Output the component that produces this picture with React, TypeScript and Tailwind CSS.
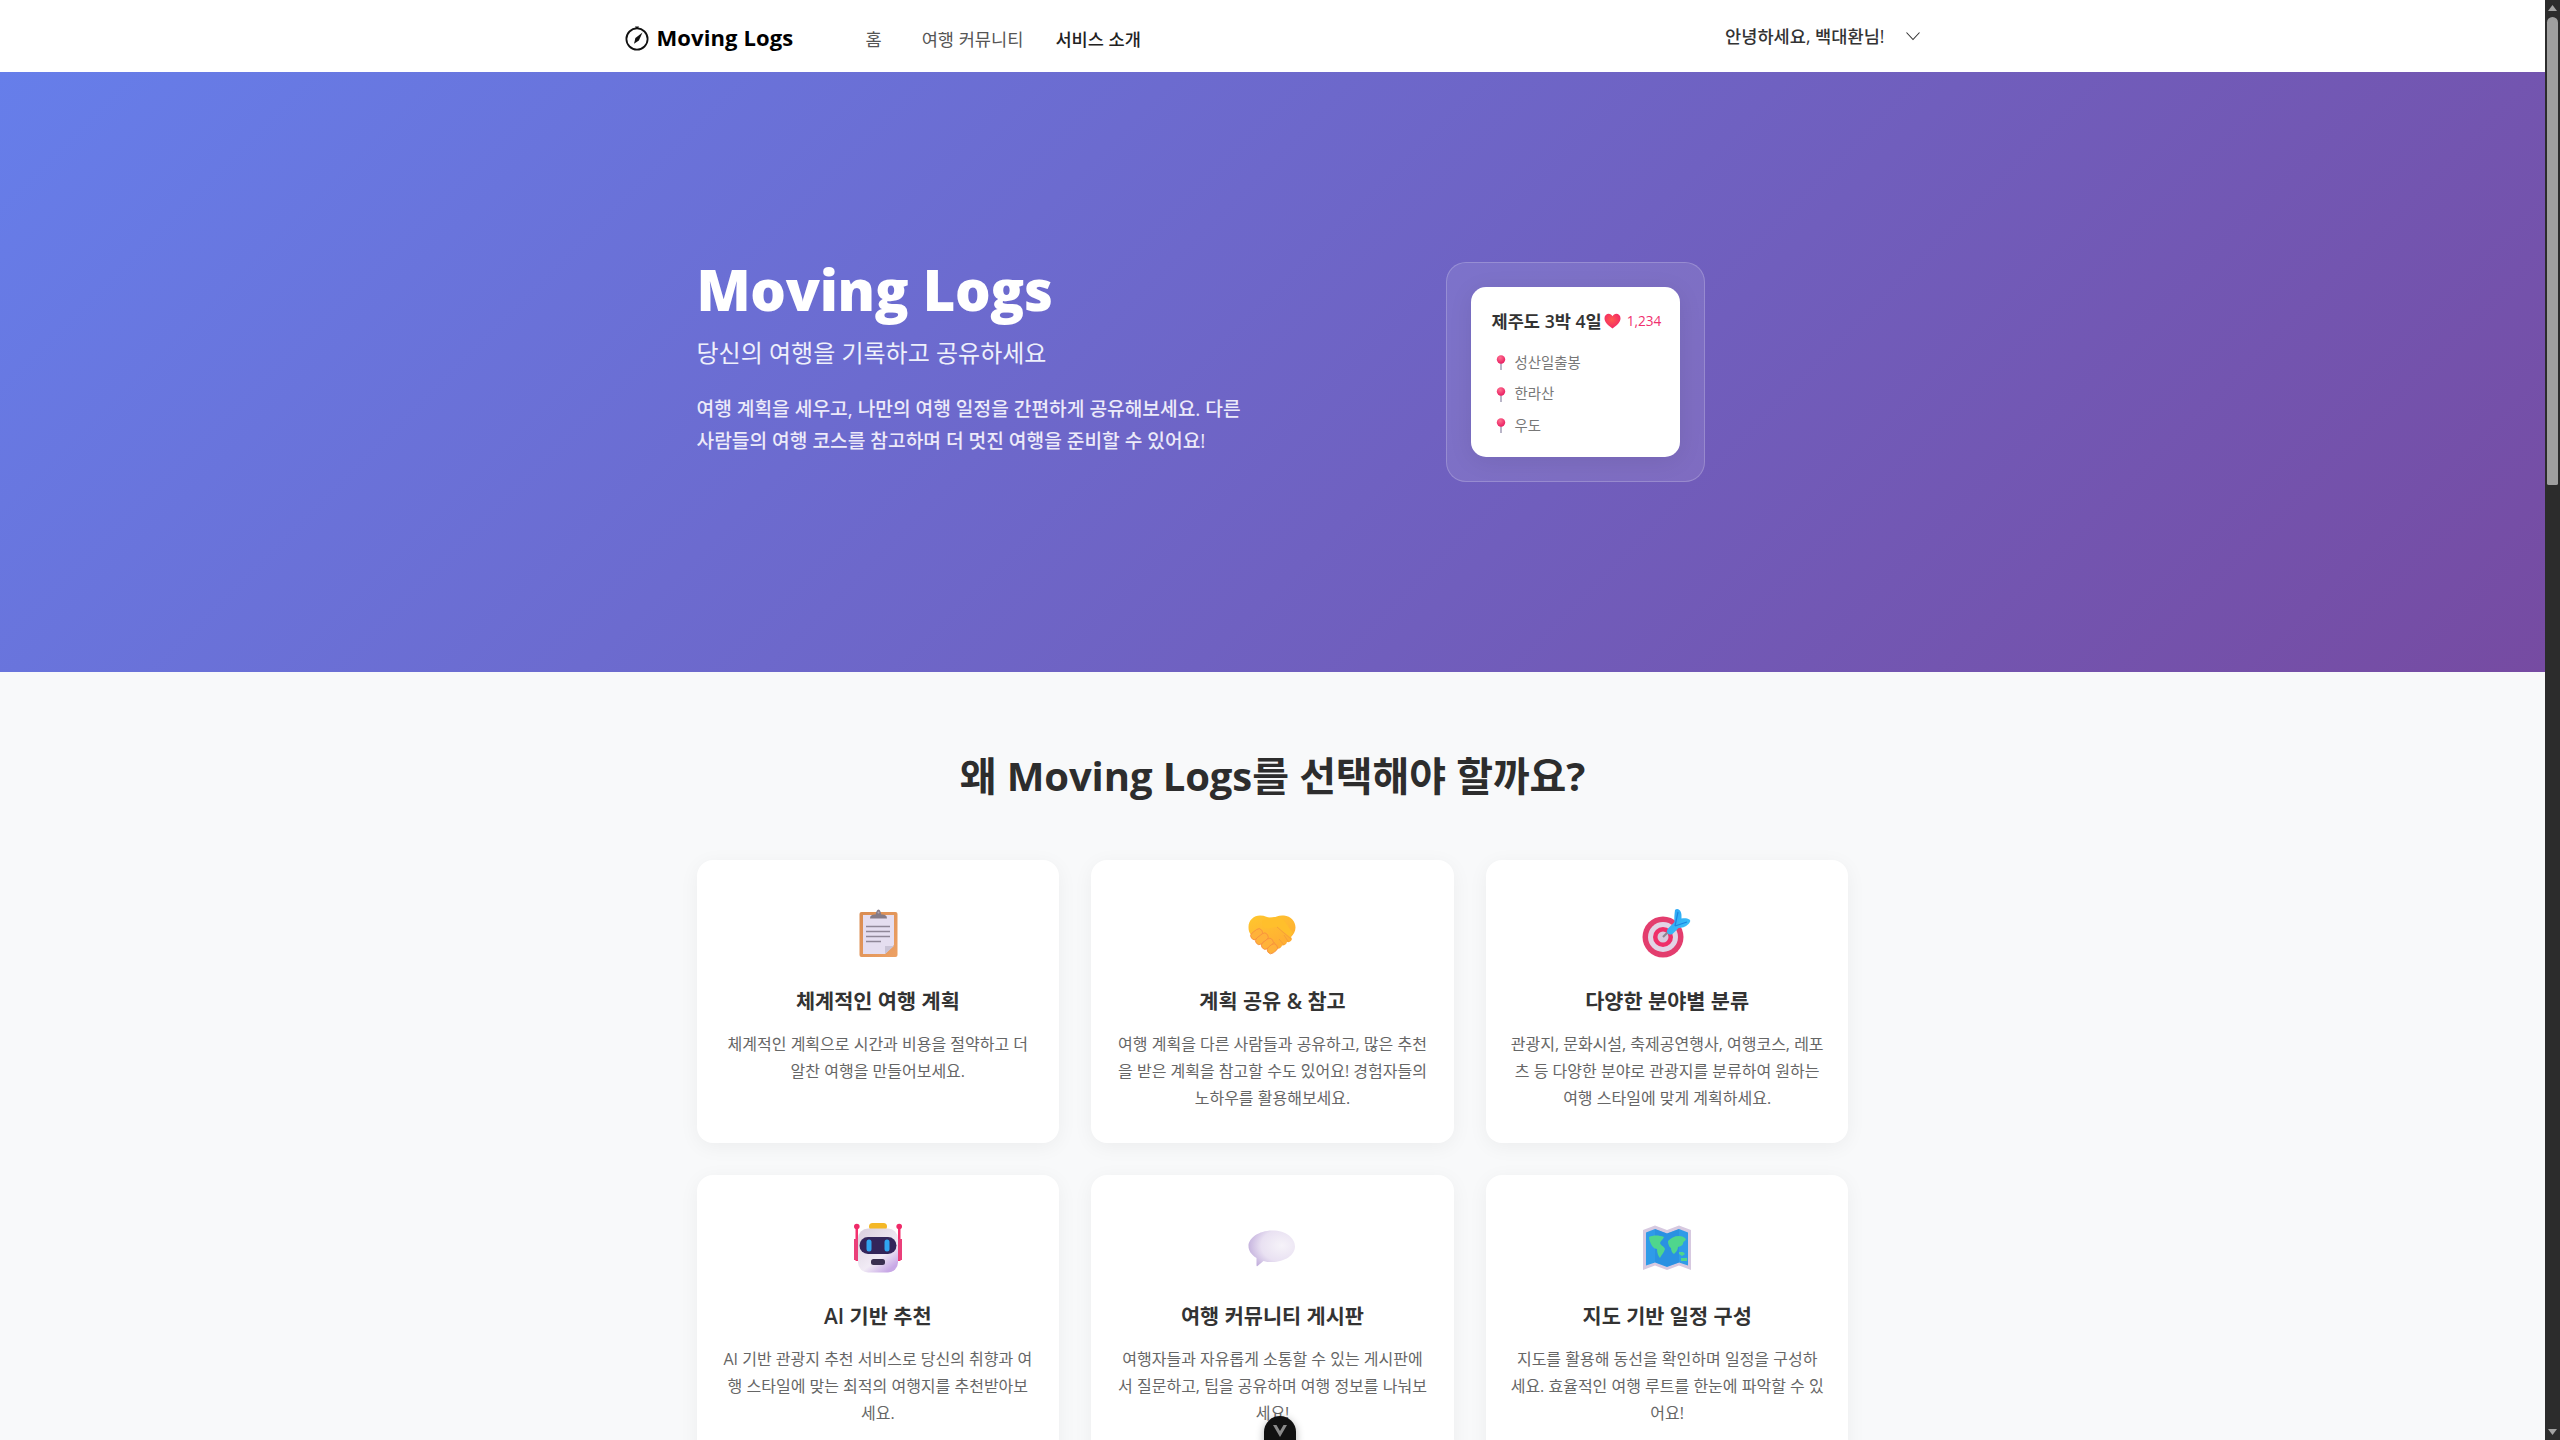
import React from "react";

const FONT = "font-['Open_Sans','Noto_Sans_CJK_KR',sans-serif]";

function Compass() {
  return (
    <svg width="28" height="28" viewBox="0 0 28 28" fill="none" className="shrink-0">
      <circle cx="14" cy="15" r="10.600" stroke="#111" strokeWidth="1.800" />
      <path d="M12 2.600h4l-1 2h-2z" fill="#111" />
      <path d="M19.500 8.600 15.900 16.600 11 19.800 12.400 14z" fill="#111" />
    </svg>
  );
}

function Chevron() {
  return (
    <svg width="16" height="10" viewBox="0 0 16 10" fill="none">
      <path d="M1.500 1.500 8 8.500l6.500-7" stroke="#333" strokeWidth="1.100" />
    </svg>
  );
}

function Heart() {
  return (
    <svg width="17" height="16" viewBox="0 0 17 16" className="shrink-0">
      <defs>
        <radialGradient id="hg" cx="0.45" cy="0.4" r="0.7">
          <stop offset="0" stopColor="#ff5a4e" />
          <stop offset="1" stopColor="#f01f6b" />
        </radialGradient>
      </defs>
      <path d="M8.500 15.500C3 11.500 .5 9 .5 5.300 .5 2.500 2.600.8 4.700.8c1.600 0 3 .9 3.800 2.400C9.300 1.700 10.700.8 12.300.8c2.100 0 4.200 1.700 4.200 4.500 0 3.700-2.500 6.200-8 10.200z" fill="url(#hg)" />
    </svg>
  );
}

function Pin() {
  return (
    <svg width="10" height="15" viewBox="0 0 10 15" className="shrink-0">
      <defs>
        <radialGradient id="pg" cx="0.4" cy="0.3" r="0.7">
          <stop offset="0" stopColor="#ff6f8f" />
          <stop offset="1" stopColor="#e81e62" />
        </radialGradient>
      </defs>
      <rect x="4" y="7" width="2" height="8" fill="#b9b5c8" />
      <circle cx="5" cy="4.500" r="4.200" fill="url(#pg)" />
    </svg>
  );
}

function Clipboard() {
  return (
    <svg width="48" height="48" viewBox="0 0 48 48">
      <defs>
        <linearGradient id="cb" x1="0" y1="0" x2="1" y2="1">
          <stop offset="0" stopColor="#d98c52" />
          <stop offset="1" stopColor="#eda164" />
        </linearGradient>
      </defs>
      <rect x="5.500" y="3" width="38" height="45" rx="2" fill="url(#cb)" />
      <path d="M9 6h31v30l-9 9H9z" fill="#e5def0" />
      <path d="M31 45v-8h9z" fill="#c9c3d6" />
      <path d="M16 9.500c0-3 2-4 4.500-4h1.200C22 3.500 23 .5 24.500.5S27 3.500 27.300 5.500h1.200c2.500 0 4.500 1 4.500 4z" fill="#857b88" />
      <circle cx="24.500" cy="3.500" r="1" fill="#b4a9b6" />
      <path d="M12 17.500h24M12 22.500h24M12 27.500h24M12 32.500h15" stroke="#8f8798" strokeWidth="1.400" />
    </svg>
  );
}

function Handshake() {
  return (
    <svg width="48" height="42" viewBox="0 0 48 42" className="mt-[5px]">
      <defs>
        <linearGradient id="hs" x1="0" y1="0" x2="0.6" y2="1">
          <stop offset="0" stopColor="#ffc72e" />
          <stop offset="1" stopColor="#ffab34" />
        </linearGradient>
      </defs>
      <path d="M.5 12C.5 5 6 .5 12 .5c5 0 8 2 11 3 5-2 8-3.500 13-3 7 .5 11.500 6 11.500 12 0 4-2 7-4.500 9.500l1 2c-.5 2.500-3 3.500-5 3-.5 2.500-3 4-5 3.500-.5 2.500-3 3.500-5 3-2 3-4 4-6.500 3C15 30 6 24 3 20 1 17.500.5 15 .5 12z" fill="url(#hs)" />
      <path d="M15 5c5-3 11-3 17-3 5 3 8 10 13 16l-2.500 4L29 12c-4 0-8 2-12 1-3-1-4-6-2-8z" fill="#ffbf2c" />
      <path d="M29 12 43 24M36 20l4.500 7M31 24l5 6M26 27l4 6" stroke="#f5a03a" strokeWidth="1" fill="none" />
      <g fill="#ffb23a" stroke="#f78f3f" strokeWidth=".8">
        <rect x="2" y="15.500" width="13" height="7.500" rx="3.700" transform="rotate(-38 8.500 19)" />
        <rect x="7" y="20" width="14" height="7.500" rx="3.700" transform="rotate(-38 14 24)" />
        <rect x="13" y="25" width="13" height="7.500" rx="3.700" transform="rotate(-38 19.500 29)" />
        <rect x="19" y="30" width="11" height="7.500" rx="3.700" transform="rotate(-38 24.500 34)" />
      </g>
    </svg>
  );
}

function Target() {
  return (
    <svg width="50" height="50" viewBox="0 0 50 50">
      <defs>
        <linearGradient id="dt" x1="0" y1="0" x2="1" y2="1">
          <stop offset="0" stopColor="#2aa3f5" />
          <stop offset="1" stopColor="#3fc4f7" />
        </linearGradient>
      </defs>
      <circle cx="21" cy="29" r="20.500" fill="#e33d6e" />
      <circle cx="21" cy="29" r="15" fill="#e2d4e6" />
      <circle cx="21" cy="29" r="10" fill="#ef2f69" />
      <circle cx="21" cy="29" r="5.500" fill="#d8c9dc" />
      <path d="M21 29 29 21" stroke="#8b8590" strokeWidth="2.200" />
      <path d="M33 2c2-2 5-.5 6 2.500.7 2 .5 4 .5 6 3-.5 5.500-.5 8 1 1.500 1 .5 3-1 4.500-3 3-7 4-10 4l-5 5c-2 2-5 2-6 0-1.500-2 0-4 2-6l5-5c-.5-3 0-8.500.5-12z" fill="url(#dt)" />
      <path d="M33 18 45 14M33 18l3-14" stroke="#1c86e0" strokeWidth="1.200" />
    </svg>
  );
}

function Robot() {
  return (
    <svg width="48" height="50" viewBox="0 0 48 50">
      <defs>
        <linearGradient id="rb" x1="0" y1="0" x2="0.7" y2="1">
          <stop offset="0" stopColor="#d9cfdd" />
          <stop offset="0.7" stopColor="#f1ebf5" />
          <stop offset="1" stopColor="#c8a8e6" />
        </linearGradient>
      </defs>
      <rect x="1.500" y="4" width="2.500" height="34" fill="#f3306e" />
      <rect x="44" y="4" width="2.500" height="34" fill="#f3306e" />
      <circle cx="2.800" cy="3.500" r="2.800" fill="#ef2a68" />
      <circle cx="45.200" cy="3.500" r="2.800" fill="#ef2a68" />
      <path d="M0 16h5v21H0z" fill="#ea3f7a" />
      <path d="M43 16h5v21h-5z" fill="#ea3f7a" />
      <rect x="15" y="0" width="18" height="7" rx="3.500" fill="#f4b827" />
      <rect x="4" y="5.500" width="40" height="44" rx="10" fill="url(#rb)" />
      <rect x="5.500" y="14" width="37" height="17" rx="8.500" fill="#33255a" />
      <rect x="12.500" y="16.500" width="5" height="12" rx="2.500" fill="#30a5f0" />
      <rect x="30.500" y="16.500" width="5" height="12" rx="2.500" fill="#30a5f0" />
      <rect x="17" y="36" width="14" height="6" rx="2.500" fill="#3a3050" />
    </svg>
  );
}

function Speech() {
  return (
    <svg width="48" height="38" viewBox="0 0 48 38" className="mt-[2px]">
      <defs>
        <radialGradient id="sp" cx="0.72" cy="0.42" r="0.75">
          <stop offset="0" stopColor="#f6f3f9" />
          <stop offset="0.6" stopColor="#e9e1f2" />
          <stop offset="1" stopColor="#c3b0dd" />
        </radialGradient>
      </defs>
      <path d="M24.500.5C38 .5 47 8 47 16.500 47 25 37 32 24 32c-3.500 0-6 0-8.500-1L9.500 36c-.5.500-1 .3-1-.5L8.500 28C3 24.500 .5 20.500 .5 16 .5 8 11 .5 24.500.5z" fill="url(#sp)" />
    </svg>
  );
}

function MapIcon() {
  return (
    <svg width="48" height="46" viewBox="0 0 48 46">
      <path d="M0 5l12-4.500L24 5l12-4.500L48 5v40l-12-4.500L24 45l-12-4.500L0 45z" fill="#d7c9e0" />
      <path d="M3 7.500l9-3.500 12 4.500 12-4.500 9 3.500v33l-9-3-12 4.500-12-4.500-9 3z" fill="#2f9be8" />
      <path d="M12 4l12 4.500v33L12 37zM36 4v33.500l-12 4v-33z" fill="#2688dc" opacity=".55" />
      <path d="M6 12c4-2 10-2 15 0-1 3-3 3-4 6 1 3 4 3 5 6-1 4-4 6-5 9-2-2-3-6-3-9-3 0-5-3-6-5s-2-5-2-7z" fill="#4fd68d" />
      <path d="M25 16c3-3 6-5 11-5 3 0 5 1 7 3-1 3-3 2-3 5-1 2-3 2-5 3 0 3-2 5-4 7-2-1-3-4-3-6-2-1-3-4-3-7z" fill="#4fd68d" />
      <path d="M36 27h4l2 2-3 2-3-2zM38 33h6v3h-6z" fill="#4fd68d" />
    </svg>
  );
}

type CardData = { icon: React.ReactNode; title: string; desc: string };

const cards: CardData[] = [
  { icon: <Clipboard />, title: "체계적인 여행 계획", desc: "체계적인 계획으로 시간과 비용을 절약하고 더 알찬 여행을 만들어보세요." },
  { icon: <Handshake />, title: "계획 공유 & 참고", desc: "여행 계획을 다른 사람들과 공유하고, 많은 추천을 받은 계획을 참고할 수도 있어요! 경험자들의 노하우를 활용해보세요." },
  { icon: <Target />, title: "다양한 분야별 분류", desc: "관광지, 문화시설, 축제공연행사, 여행코스, 레포츠 등 다양한 분야로 관광지를 분류하여 원하는 여행 스타일에 맞게 계획하세요." },
  { icon: <Robot />, title: "AI 기반 추천", desc: "AI 기반 관광지 추천 서비스로 당신의 취향과 여행 스타일에 맞는 최적의 여행지를 추천받아보세요." },
  { icon: <Speech />, title: "여행 커뮤니티 게시판", desc: "여행자들과 자유롭게 소통할 수 있는 게시판에서 질문하고, 팁을 공유하며 여행 정보를 나눠보세요!" },
  { icon: <MapIcon />, title: "지도 기반 일정 구성", desc: "지도를 활용해 동선을 확인하며 일정을 구성하세요. 효율적인 여행 루트를 한눈에 파악할 수 있어요!" },
];

function Scrollbar() {
  return (
    <div className="w-[15px] shrink-0 h-screen bg-[#2c2c2c] flex flex-col items-center">
      <svg width="15" height="17" viewBox="0 0 15 17" className="shrink-0">
        <path d="M7.500 5 12 11H3z" fill="#a3a3a3" />
      </svg>
      <div className="w-[11px] h-[468px] rounded-t-[6px] rounded-b-[2px] bg-[#9f9f9f]" />
      <div className="flex-1" />
      <svg width="15" height="17" viewBox="0 0 15 17" className="shrink-0">
        <path d="M7.500 12 12 6H3z" fill="#a3a3a3" />
      </svg>
    </div>
  );
}

export default function App() {
  return (
    <div className={`relative h-screen overflow-hidden flex bg-[#f8f9fa] ${FONT}`}>
      <div className="flex-1 min-w-0 h-screen overflow-hidden">
        <nav className="h-[72px] bg-white">
          <div className="max-w-[1300px] mx-auto h-full flex items-center justify-between">
            <div className="flex items-center">
              <div className="flex items-center gap-[6px] w-[243px] pt-[3px]">
                <Compass />
                <span className="text-[22px] font-bold text-black tracking-[0.1px]">Moving Logs</span>
              </div>
              <div className="flex items-center gap-[32px] text-[17.6px] pt-[6px] text-[#555]">
                <span className="mr-[8px]">홈</span>
                <span>여행 커뮤니티</span>
                <span className="font-medium text-[#222]">서비스 소개</span>
              </div>
            </div>
            <div className="flex items-center gap-[20px] pr-[2px]">
              <span className="text-[17.6px] font-medium text-[#333]">안녕하세요, 백대환님!</span>
              <Chevron />
            </div>
          </div>
        </nav>

        <section className="h-[600px] bg-[linear-gradient(135deg,#667eea_0%,#764ba2_100%)]">
          <div className="max-w-[1200px] mx-auto px-[24px] pt-[190px] flex text-white">
            <div className="w-[749px] shrink-0 -mt-[5px]">
              <h1 className="text-[56px] leading-[64px] font-extrabold text-white tracking-[-0.3px]">Moving Logs</h1>
              <p className="mt-[14px] text-[24px] leading-[36px] text-[#eef0fb]">당신의 여행을 기록하고 공유하세요</p>
              <p className="mt-[22px] text-[19.2px] leading-[32px] w-[560px] font-medium text-[#eceaf9]">
                여행 계획을 세우고, 나만의 여행 일정을 간편하게 공유해보세요. 다른 사람들의 여행 코스를 참고하며 더 멋진 여행을 준비할 수 있어요!
              </p>
            </div>
            <div className="w-[259px] h-[220px] shrink-0 rounded-[20px] border border-white/20 bg-white/10 p-[24px]">
              <div className="h-[170px] rounded-[15px] bg-white pl-[21px] pr-[19px] pt-[20px] shadow-[0_4px_24px_rgba(0,0,0,0.08)]">
                <div className="flex items-center">
                  <span className="text-[17.6px] leading-[28px] font-semibold text-[#333] whitespace-nowrap">제주도 3박 4일</span>
                  <span className="ml-[2px]"><Heart /></span>
                  <span className="ml-[6px] text-[13.6px] text-[#f0306e]">1,234</span>
                </div>
                <ul className="mt-[12px] flex flex-col text-[14.4px] text-[#777]">
                  <li className="flex items-center h-[31.5px] pl-[4px] gap-[9px]"><Pin />성산일출봉</li>
                  <li className="flex items-center h-[31.5px] pl-[4px] gap-[9px]"><Pin />한라산</li>
                  <li className="flex items-center h-[31.5px] pl-[4px] gap-[9px]"><Pin />우도</li>
                </ul>
              </div>
            </div>
          </div>
        </section>

        <section className="max-w-[1200px] mx-auto px-[24px] pt-[72px]">
          <h2 className="text-center text-[40px] leading-[64px] font-bold text-[#2d2d2d] tracking-[-0.1px]">왜 Moving Logs를 선택해야 할까요?</h2>
          <div className="mt-[52px] grid grid-cols-3 gap-[32px]">
            {cards.map((c) => (
              <div key={c.title} className="h-[283px] rounded-[16px] bg-white px-[24px] pt-[48px] text-center shadow-[0_4px_20px_rgba(0,0,0,0.05)]">
                <div className="h-[50px] flex items-center justify-center">{c.icon}</div>
                <h3 className="mt-[29px] text-[20.8px] leading-[28px] font-semibold text-[#333]">{c.title}</h3>
                <p className="mt-[16px] text-[16px] leading-[27px] text-[#666]">{c.desc}</p>
              </div>
            ))}
          </div>
        </section>
      </div>
      <Scrollbar />
      <div className="absolute left-[1264px] top-[1416px] w-[32px] h-[40px] rounded-[16px] bg-[#111] shadow-[0_2px_8px_rgba(0,0,0,0.3)] flex justify-center pt-[9px]">
        <svg width="14" height="12" viewBox="0 0 14 12">
          <path d="M0 0h3.500L7 6l3.500-6H14L7 12z" fill="#8a8a8a" />
        </svg>
      </div>
    </div>
  );
}
